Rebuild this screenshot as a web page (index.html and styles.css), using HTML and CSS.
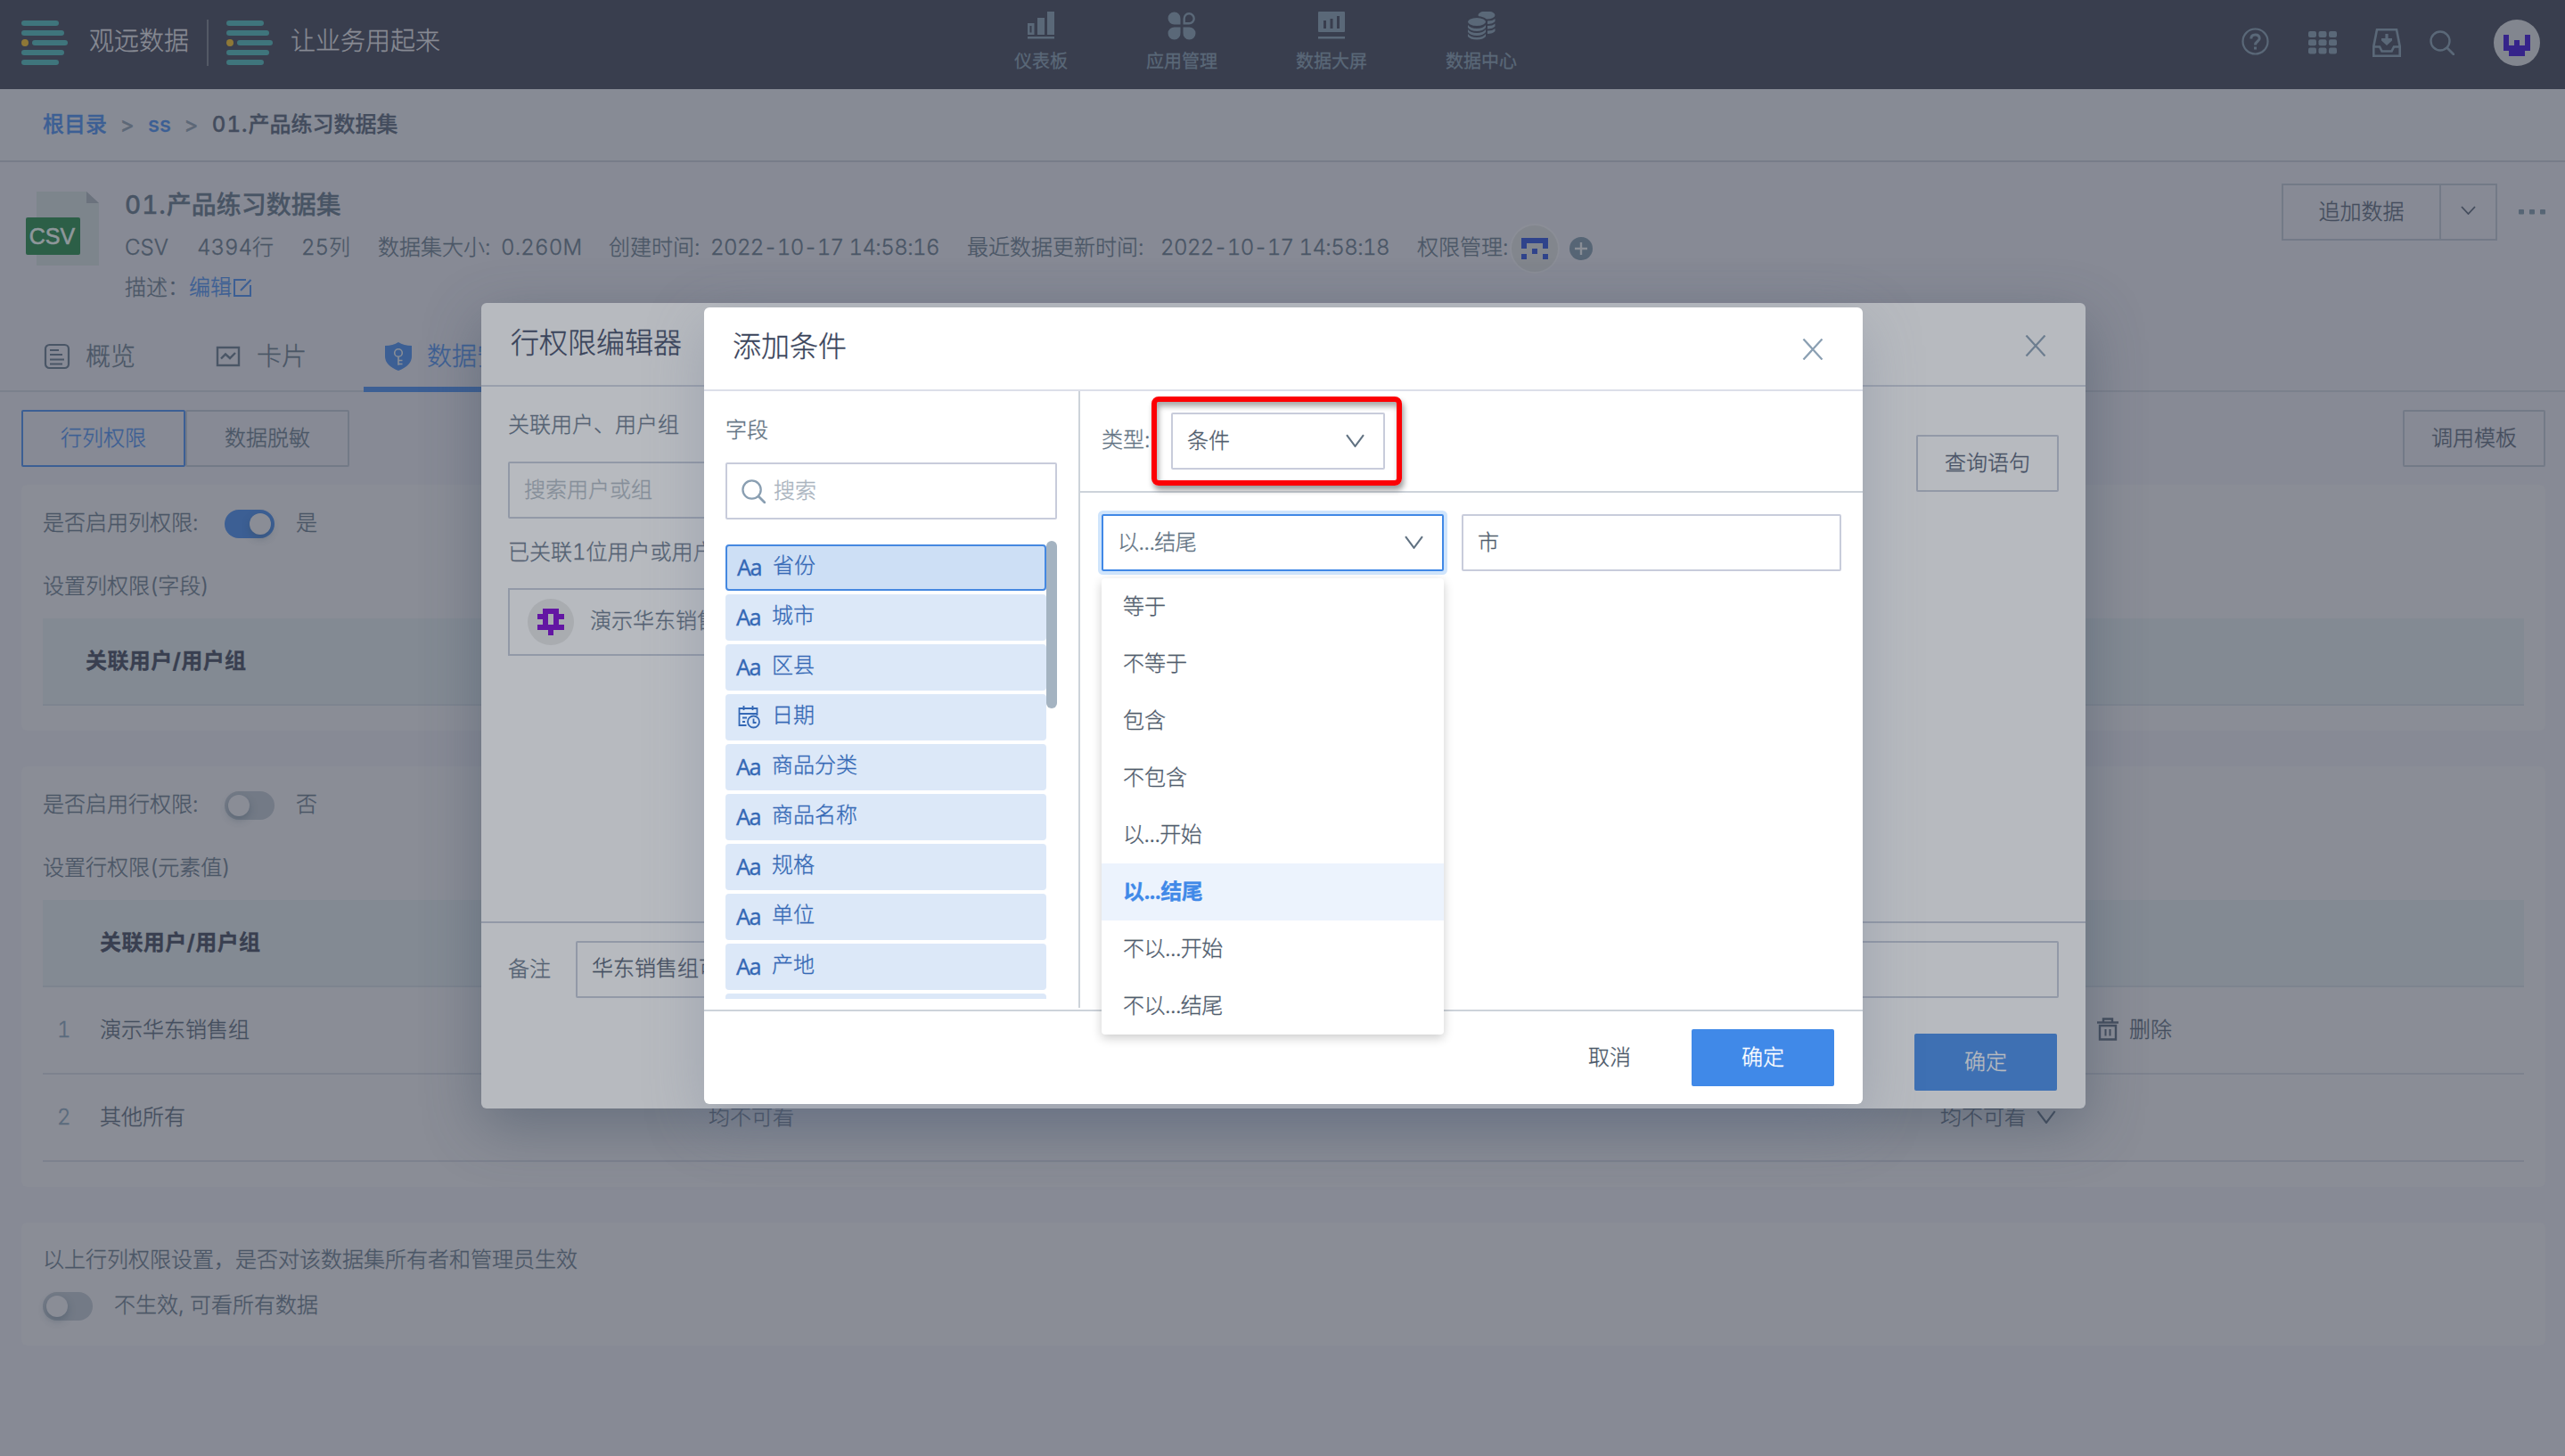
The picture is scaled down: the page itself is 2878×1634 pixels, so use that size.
FILE: index.html
```html
<!DOCTYPE html>
<html lang="zh-CN">
<head>
<meta charset="utf-8">
<title>01.产品练习数据集</title>
<link rel="stylesheet" href="styles.css">
</head>
<body>
<svg class="defs" width="0" height="0" aria-hidden="true">
  <symbol id="logo" viewBox="0 0 52 50">
    <g fill="#3f757c"><rect width="42" height="6" rx="3"/><rect y="11" width="48" height="6" rx="3"/><rect x="12" y="22" width="40" height="6" rx="3"/><rect y="33" width="48" height="6" rx="3"/><rect y="44" width="42" height="6" rx="3"/></g>
    <ellipse cx="4" cy="25" rx="4" ry="4" fill="#8e7837"/>
  </symbol>
  <symbol id="down" viewBox="0 0 20 14"><path d="M1 1l9 12 9-12" fill="none" stroke="currentColor" stroke-width="2"/></symbol>
  <symbol id="close" viewBox="0 0 24 24"><path d="M1.500 .5l21 23M22.500 .5l-21 23" fill="none" stroke="currentColor" stroke-width="2.200"/></symbol>
  <symbol id="search" viewBox="0 0 28 28"><circle cx="12" cy="12" r="10.500" fill="none" stroke="currentColor" stroke-width="2.400"/><path d="M20 20l7 7" stroke="currentColor" stroke-width="2.800" stroke-linecap="round"/></symbol>
</svg>

<header class="topbar">
  <div class="brand">
    <svg class="logo"><use href="#logo"/></svg>
    <span class="brand-name">观远数据</span>
    <i class="brand-sep"></i>
    <svg class="logo"><use href="#logo"/></svg>
    <span class="brand-slogan">让业务用起来</span>
  </div>
  <nav class="mainnav">
    <a><svg width="32" height="32" viewBox="0 0 32 32" fill="currentColor"><path fill-rule="evenodd" d="M1 13h7.500v13H1zM3.500 16v7.500h2V16z"/><path d="M12 7h8v19h-8zM23 0h8v26h-8zM1 28h30v2.500H1z"/></svg>仪表板</a>
    <a><svg width="32" height="32" viewBox="0 0 32 32" fill="currentColor"><path d="M14.500 14.500H8A7 7 0 1 1 14.500 8zM14.500 17.500V24A7 7 0 1 1 8 17.500zM17.500 17.500H24A7 7 0 1 1 17.500 24z"/><path d="M18.700 13.300V8a5.500 5.500 0 1 1 5.500 5.300z" fill="none" stroke="currentColor" stroke-width="2.400"/></svg>应用管理</a>
    <a><svg width="32" height="32" viewBox="0 0 32 32" fill="currentColor"><path fill-rule="evenodd" d="M2 0h28a1 1 0 0 1 1 1v21a1 1 0 0 1-1 1H2a1 1 0 0 1-1-1V1a1 1 0 0 1 1-1zM7 10v9h3v-9zM14.500 8v11h3V8zM22 5v14h3V5z"/><path d="M1 28h30v2.500H1z"/></svg>数据大屏</a>
    <a><svg width="32" height="32" viewBox="0 0 32 32" fill="currentColor"><ellipse cx="22" cy="4" rx="9.500" ry="4.500"/><path d="M23 10.500q6 0 8.500-2.500v3q-2.500 3-8.500 3zM23 16q6 0 8.500-2.500v3q-2.500 3-8.500 3zM23 21.500q6 0 8.500-2.500v3q-2.500 3-8.500 3z"/><ellipse cx="11" cy="11.500" rx="11" ry="5.500" stroke="#393e4e" stroke-width="2"/><path d="M1 15q3 4 10 4t10-4v3q-3 4-10 4T1 18zM1 20q3 4 10 4t10-4v3q-3 4-10 4T1 23zM1 25q3 4 10 4t10-4v3q-3 3.500-10 3.500T1 28z"/></svg>数据中心</a>
  </nav>
  <div class="tools">
    <svg class="tool-help" width="31" height="31" viewBox="0 0 31 31" fill="none" stroke="currentColor" stroke-width="2.200"><circle cx="15.500" cy="15.500" r="14"/><path stroke-width="3" d="M10.800 12.500q0-4.500 4.700-4.500t4.700 4.200c0 3-4.700 3.300-4.700 7.300M15.500 21.500v3"/></svg>
    <svg class="tool-grid" width="32" height="26" viewBox="0 0 32 26" fill="currentColor"><rect width="9" height="7" rx="2"/><rect x="11.500" width="9" height="7" rx="2"/><rect x="23" width="9" height="7" rx="2"/><rect y="9.300" width="9" height="7" rx="2"/><rect x="11.500" y="9.300" width="9" height="7" rx="2"/><rect x="23" y="9.300" width="9" height="7" rx="2"/><rect y="18.500" width="9" height="7" rx="2"/><rect x="11.500" y="18.500" width="9" height="7" rx="2"/><rect x="23" y="18.500" width="9" height="7" rx="2"/></svg>
    <svg class="tool-inbox" width="32" height="32" viewBox="0 0 32 32" fill="none" stroke="currentColor" stroke-width="2.600"><path d="M5 1.300h22l3.700 18.700v10.700H1.300V20zM1.300 20.500H8l2.500 5h11l2.500-5h6.700"/><path d="M16 6v9" stroke-width="3.200"/><path d="M10 11h12v2.500L16 19l-6-5.500z" fill="currentColor" stroke="none"/></svg>
    <svg class="tool-search" width="28" height="28"><use href="#search"/></svg>
    <span class="me"><svg width="30" height="24" viewBox="0 0 5 4" fill="#36248a" shape-rendering="crispEdges"><path d="M0 0h1v2h1V1h1v1h1V0h1v3h-1v1H1V3H0z"/></svg></span>
  </div>
</header>

<div class="crumbs"><a>根目录</a><i>&gt;</i><a>ss</a><i>&gt;</i><b><span class="num">01.</span>产品练习数据集</b></div>

<section class="dataset">
  <svg class="csv" width="84" height="84" viewBox="0 0 84 84"><path d="M13 0h56l14 13v70H13z" fill="#7d858c"/><path d="M69 0l14 13H69z" fill="#6b727d"/><rect x="1" y="29" width="61" height="42" rx="2" fill="#2c5f47"/><text x="30.500" y="58.500" text-anchor="middle" class="csv-text">CSV</text></svg>
  <div class="info">
    <h1><span class="num">01.</span>产品练习数据集</h1>
    <div class="meta">
      <span class="m1">CSV</span><span class="m2">4394行</span><span class="m3">25列</span><span class="m4">数据集大小:</span><span class="m5">0.260M</span><span class="m6">创建时间:</span><span class="m7">2022-10-17 14:58:16</span><span class="m8">最近数据更新时间:</span><span class="m9">2022-10-17 14:58:18</span><span class="m10">权限管理:</span>
      <span class="owner"><svg width="30" height="24" viewBox="0 0 5 4" fill="#2f438b" shape-rendering="crispEdges"><path d="M0 0h5v2H4V1H1v1H0zM2 2h1v1H2zM0 3h1v1H0zM4 3h1v1H4z"/></svg></span>
      <svg class="plus" width="26" height="26" viewBox="0 0 26 26"><circle cx="13" cy="13" r="13" fill="#566575"/><path d="M13 6v14M6 13h14" stroke="#898e96" stroke-width="2.400"/></svg>
    </div>
    <div class="desc"><span>描述：</span><a>编辑<svg width="22" height="20" viewBox="0 0 22 20" fill="none" stroke="currentColor" stroke-width="2"><path d="M15 1H2v18h18V7M9 13L20.500 1"/></svg></a></div>
  </div>
  <div class="actions">
    <div class="split"><span class="split-main">追加数据</span><span class="split-more"><svg width="17" height="10" viewBox="0 0 17 10"><path d="M1 1l7.500 8L16 1" fill="none" stroke="currentColor" stroke-width="1.800"/></svg></span></div>
    <svg width="30" height="6" fill="#566575"><rect width="6" height="5.500" rx="1"/><rect x="12" width="6" height="5.500" rx="1"/><rect x="24" width="6" height="5.500" rx="1"/></svg>
  </div>
</section>

<nav class="tabs">
  <a class="tab"><svg width="30" height="30" viewBox="0 0 30 30" fill="none" stroke="currentColor" stroke-width="2.200"><rect x="2" y="2" width="26" height="26" rx="4.500"/><path d="M7 8h10M7 13h14M7 18.500h16M7 23.500h14"/></svg><span>概览</span></a>
  <a class="tab tab2"><svg width="28" height="24" viewBox="0 0 28 24" fill="none" stroke="currentColor" stroke-width="2.400"><rect x="2" y="2" width="24" height="20"/><path d="M6 14.500l5-5 5 4.500 6-6"/></svg><span>卡片</span></a>
  <a class="tab tab3 on"><svg width="30" height="32" viewBox="0 0 30 32"><path d="M15 0q6 4 15 4v12q0 10-15 16Q0 26 0 16V4q9 0 15-4z" fill="currentColor"/><g fill="none" stroke="#898e96" stroke-width="1.600"><circle cx="15" cy="12" r="4.300"/><path d="M15 16.300v9.500M15 20.500h4.500M15 24.500h4.500"/></g></svg><span>数据安全</span></a>
</nav>

<main class="page">
  <div class="subbar">
    <div class="seg"><span class="seg-on">行列权限</span><span>数据脱敏</span></div>
    <span class="btn">调用模板</span>
  </div>
  <section class="card card1">
    <div class="line"><span class="label">是否启用列权限:</span><i class="switch on"></i><span>是</span></div>
    <p>设置列权限(字段)</p>
    <div class="thead">关联用户/用户组</div>
  </section>
  <section class="card card2">
    <div class="line"><span class="label">是否启用行权限:</span><i class="switch"></i><span>否</span></div>
    <p>设置行权限(元素值)</p>
    <div class="thead thead2">关联用户/用户组</div>
    <div class="row"><span class="no">1</span><span class="who">演示华东销售组</span><span class="cond"></span><span class="op"></span><span class="del"><svg width="24" height="26" viewBox="0 0 24 26" fill="none" stroke="currentColor"><path d="M0 5.500h24" stroke-width="2.400"/><path d="M7 5V1.500h10V5" stroke-width="2.400"/><path d="M3 9h18v15.500H3z" stroke-width="2.400"/><path d="M9.500 13v7.500M14.500 13v7.500" stroke-width="2"/></svg>删除</span></div>
    <div class="row"><span class="no">2</span><span class="who">其他所有</span><span class="cond">均不可看</span><span class="op">均不可看<svg width="22" height="15"><use href="#down"/></svg></span></div>
  </section>
  <section class="card card3">
    <p>以上行列权限设置，是否对该数据集所有者和管理员生效</p>
    <div class="line"><i class="switch"></i><span>不生效, 可看所有数据</span></div>
  </section>
</main>

<section class="editor">
  <div class="editor-head"><h2>行权限编辑器</h2><svg width="24" height="24"><use href="#close"/></svg></div>
  <div class="editor-body">
    <div class="users">
      <div class="users-label">关联用户、用户组</div>
      <div class="users-search">搜索用户或组</div>
      <div class="users-count">已关联1位用户或用户组</div>
      <div class="user"><span class="user-pic"><svg width="30" height="30" viewBox="0 0 5 5" fill="#6316a3" shape-rendering="crispEdges"><path fill-rule="evenodd" d="M1 0h3v1h1v1H4v1h1v1H3v1H2V4H0V3h1V2H0V1h1zM2 1v2h1V1z"/></svg></span><span class="user-name">演示华东销售组</span></div>
    </div>
    <span class="query">查询语句</span>
  </div>
  <div class="editor-note"><span>备注</span><div class="note-input">华东销售组可看</div></div>
  <div class="editor-foot"><span class="ok-dim">确定</span></div>
</section>

<section class="dialog">
  <div class="dialog-head"><h2>添加条件</h2><svg width="24" height="24"><use href="#close"/></svg></div>
  <div class="dialog-body">
    <div class="fields">
      <div class="fields-label">字段</div>
      <div class="fields-search"><svg width="27" height="27"><use href="#search"/></svg>搜索</div>
      <div class="fields-wrap">
        <ul class="fields-list">
          <li class="picked"><b>Aa</b>省份</li>
          <li><b>Aa</b>城市</li>
          <li><b>Aa</b>区县</li>
          <li><svg width="26" height="26" viewBox="0 0 26 26" fill="none" stroke="currentColor" stroke-width="1.800"><path d="M10 22H2V3h20v8M2 9h20M7 0v5M17 0v5M5.500 13.500h5M5.500 18h3"/><circle cx="18" cy="18" r="6.500"/><path d="M18 14.500V19h3"/></svg>日期</li>
          <li><b>Aa</b>商品分类</li>
          <li><b>Aa</b>商品名称</li>
          <li><b>Aa</b>规格</li>
          <li><b>Aa</b>单位</li>
          <li><b>Aa</b>产地</li>
          <li></li>
        </ul>
        <i class="thumb"></i>
      </div>
    </div>
    <div class="rule">
      <div class="rule-type"><span>类型:</span><div class="select type-select">条件<svg width="21" height="15"><use href="#down"/></svg><i class="highlight"></i></div></div>
      <div class="rule-row">
        <div class="select op-select"><span class="dots">以...结尾</span><svg width="21" height="15"><use href="#down"/></svg>
          <ul class="menu">
            <li>等于</li><li>不等于</li><li>包含</li><li>不包含</li><li class="dots">以...开始</li><li class="dots cur">以...结尾</li><li class="dots">不以...开始</li><li class="dots">不以...结尾</li>
          </ul>
        </div>
        <div class="value">市</div>
      </div>
    </div>
  </div>
  <div class="dialog-foot"><span class="cancel">取消</span><span class="ok">确定</span></div>
</section>
</body>
</html>
```
FILE: styles.css
```css
* { box-sizing: border-box; margin: 0; padding: 0; }
html, body { width: 2878px; height: 1634px; overflow: hidden; }
body {
  background: #878a95;
  color: #4a5666;
  font: 300 24px/36px Inter, "Noto Sans CJK SC", sans-serif;
  font-variant-numeric: tabular-nums;
  -webkit-text-stroke: .3px currentColor;
}
.defs { position: absolute; }
svg { display: block; flex: none; }
i, b { font-style: normal; }
ul { list-style: none; }
span { white-space: nowrap; }
.num { letter-spacing: 1px; }
.dots { letter-spacing: -.5px; }

/* top bar */
.topbar { display: grid; grid-template-columns: 1138px auto 1fr; height: 100px; background: #393e4e; color: #5a6878; }
.brand { display: flex; align-items: center; padding: 0 0 4px 24px; color: #888b94; font-size: 28px; }
.logo { width: 52px; height: 50px; }
.brand-name, .brand-slogan { padding-bottom: 4px; }
.brand-name { margin-left: 24px; width: 132px; }
.brand-sep { width: 2px; height: 52px; background: #535965; margin-right: 20px; }
.brand-slogan { margin-left: 20px; }
.mainnav { display: flex; gap: 88px; padding-top: 13px; font-size: 20px; line-height: 28px; font-weight: 400; }
.mainnav a { display: flex; flex-direction: column; align-items: center; gap: 10px; }
.tools { display: flex; align-items: center; justify-content: flex-end; padding: 0 28px 4px 0; }
.tool-help { margin: 0 44px 4px 0; }
.tool-grid { margin-right: 40px; }
.tool-inbox { margin-right: 32px; }
.tool-search { margin-right: 44px; }
.me { width: 52px; height: 52px; border-radius: 50%; background: #82868f; display: flex; align-items: center; justify-content: center; padding-top: 6px; }

/* breadcrumb */
.crumbs { height: 82px; border-bottom: 2px solid #777c89; background: #878b95; display: flex; align-items: center; padding: 0 0 1px 48px; font-weight: 500; }
.crumbs a { color: #3c5f94; }
.crumbs i { width: 46px; text-align: center; color: #5d6877; }
.crumbs b { font-weight: 500; color: #434c5d; }

/* dataset summary */
.dataset { display: flex; height: 182px; padding: 0 22px 0 28px; }
.csv { margin-top: 33px; }
.csv-text { font: 500 25px "Liberation Sans", Arial, sans-serif; fill: #8f979b; stroke: #8f979b; stroke-width: .6px; }
.info { margin-left: 28px; flex: 1; }
.info h1 { margin-top: 29px; font-size: 28px; font-weight: 500; line-height: 38px; color: #485464; }
.meta { display: flex; align-items: center; height: 56px; margin-top: 1px; }
.m1 { width: 81px; } .m2 { width: 117px; } .m3 { width: 86px; } .m4 { width: 138px; } .m5 { width: 121px; letter-spacing: .2px; }
.m6 { width: 114px; } .m7 { width: 288px; } .m8 { width: 217px; } .m9 { width: 288px; } .m10 { width: 106px; }
.m7, .m9 { letter-spacing: -.57px; }
.owner { width: 52px; height: 52px; border-radius: 50%; background: #82868d; box-shadow: 0 0 0 2px #8b8e97; display: flex; align-items: center; justify-content: center; margin-top: 2px; }
.plus { margin: 2px 0 0 13px; }
.desc { display: flex; margin-top: -1px; }
.desc span { width: 72px; }
.desc a { display: flex; align-items: center; color: #3c5f94; gap: 1px; }
.actions { display: flex; align-items: center; height: 64px; margin-top: 24px; gap: 24px; }
.split { display: flex; width: 242px; height: 64px; border: 2px solid #737a87; color: #444d5d; }
.split-main { flex: 1; display: flex; align-items: center; justify-content: center; padding-bottom: 1px; }
.split-more { width: 63px; border-left: 2px solid #737a87; display: flex; align-items: center; justify-content: center; padding-bottom: 4px; }

/* tabs */
.tabs { display: flex; height: 76px; padding-left: 25px; border-bottom: 2px solid #7b808c; font-size: 28px; }
.tab { display: flex; align-items: center; height: 76px; padding: 0 24px 5px; gap: 17px; }
.tab2 { margin-left: 42px; gap: 18px; padding-right: 22px; }
.tab3 { margin-left: 42px; padding: 6px 24px 5px; width: 200px; }
.tab.on { color: #3c5f94; border-bottom: 6px solid #3c5f94; }

/* permissions page */
.page { padding: 20px 22px 0 24px; }
.subbar { display: flex; justify-content: space-between; height: 64px; }
.seg { display: flex; }
.seg span, .btn { display: flex; align-items: center; justify-content: center; height: 64px; border: 2px solid #737a87; border-radius: 2px; padding-bottom: 1px; }
.seg span { width: 184px; }
.seg .seg-on { border-color: #3c5f94; color: #3c5f94; }
.btn { width: 160px; color: #444d5d; }
.card { background: #8a8d96; border-radius: 6px; padding: 25px 24px 24px; }
.card1 { height: 276px; margin-top: 20px; }
.card2 { height: 472px; margin-top: 40px; }
.card3 { height: 138px; margin-top: 40px; }
.line { display: flex; align-items: center; height: 36px; gap: 24px; }
.label { width: 180px; }
.switch { width: 56px; height: 32px; border-radius: 16px; background: #737a86; margin-top: 2px; padding: 4px; }
.switch::before { content: ""; display: block; width: 24px; height: 24px; border-radius: 50%; background: #8a8d96; box-shadow: 0 4px 8px rgba(50, 70, 85, .35); }
.switch.on { background: #3c5f94; }
.switch.on::before { margin-left: 24px; }
.card p { margin-top: 35px; line-height: 36px; }
.thead { height: 98px; margin-top: 18px; padding: 0 48px 1px; display: flex; align-items: center; background: #838a93; border-bottom: 2px solid #7d848f; font-weight: 700; letter-spacing: .4px; color: #393f50; }
.thead2 { padding-left: 64px; }
.row { display: grid; grid-template-columns: 64px 683px 1382px 176px 1fr; align-items: center; height: 98px; padding-bottom: 1px; border-bottom: 2px solid #7d828e; color: #444e5e; }
.no { padding-left: 16px; color: #5a6b7d; }
.op, .del { display: flex; align-items: center; gap: 12px; }
.del svg { margin-top: -2px; }
.card3 p { margin-top: -1px; }
.card3 .line { margin-top: 15px; }

/* row permission editor */
.editor { position: absolute; left: 540px; top: 340px; width: 1800px; height: 904px; background: #b7babf; border-radius: 6px; box-shadow: 0 20px 64px rgba(60, 75, 95, .45); overflow: hidden; color: #536172; }
.editor-head { display: flex; align-items: center; justify-content: space-between; height: 94px; padding: 0 44px 3px 33px; border-bottom: 2px solid #999fac; color: #6c7d8f; }
.editor-head svg { margin-top: 6px; }
.dialog-head svg { margin-top: 5px; }
h2 { font-size: 32px; font-weight: 300; color: #39435a; }
.editor-body { display: flex; justify-content: space-between; height: 602px; padding: 0 30px; border-bottom: 2px solid #9299a7; }
.users { width: 520px; }
.users-label { margin-top: 25px; }
.users-search { height: 64px; margin-top: 23px; padding: 0 16px 2px; border: 2px solid #9299a7; border-radius: 2px; line-height: 59px; color: #858e99; }
.users-count { margin-top: 20px; }
.user { display: flex; align-items: center; gap: 18px; height: 76px; margin-top: 22px; padding-left: 20px; border: 2px solid #9299a7; }
.user-pic { width: 52px; height: 52px; border-radius: 50%; background: #a9acb0; display: flex; align-items: center; justify-content: center; }
.user-name { padding-bottom: 3px; }
.query { width: 160px; height: 64px; margin-top: 54px; border: 2px solid #9299a7; border-radius: 2px; display: flex; align-items: center; justify-content: center; padding-bottom: 1px; color: #465064; }
.editor-note { display: flex; align-items: center; padding: 20px 30px 0; gap: 28px; }
.note-input { flex: 1; height: 64px; border: 2px solid #9299a7; border-radius: 2px; padding: 0 16px; line-height: 58px; color: #444f62; }
.editor-foot { display: flex; justify-content: flex-end; padding: 40px 32px 0; }
.ok-dim, .ok { width: 160px; height: 64px; border-radius: 2px; display: flex; align-items: center; justify-content: center; padding-bottom: 1px; }
.ok-dim { background: #3e70b3; color: #b7babf; }

/* add-condition dialog */
.dialog { position: absolute; left: 790px; top: 345px; width: 1300px; height: 894px; background: #fff; border-radius: 6px; box-shadow: 0 20px 64px rgba(110, 120, 145, .35); color: #617282; }
.dialog-head { display: flex; align-items: center; justify-content: space-between; height: 94px; padding: 0 44px 4px 32px; border-bottom: 2px solid #dcdfe9; color: #8a9fb2; }
.dialog-body { display: flex; height: 696px; border-bottom: 2px solid #cdd3da; }
.fields { width: 422px; height: 692px; padding: 0 24px; border-right: 2px solid #cdd3da; }
.fields-label { margin-top: 26px; }
.fields-search { display: flex; align-items: center; height: 64px; margin-top: 18px; padding: 0 16px 1px; gap: 9px; border: 2px solid #c8ccdb; border-radius: 2px; color: #a9b3be; }
.fields-search svg { color: #8a9fb2; margin-top: 2px; }
.fields-wrap { display: flex; width: 372px; height: 514px; margin-top: 24px; overflow: hidden; }
.fields-list { width: 360px; padding-top: 4px; }
.fields-list li { display: flex; align-items: center; height: 52px; margin-bottom: 4px; padding: 0 12px 4px; border-radius: 4px; background: #dce8f8; color: #3468b5; }
.fields-list b { width: 40px; font: 400 25px/36px "Noto Sans", sans-serif; letter-spacing: -1.5px; padding-top: 2px; }
.fields-list svg { margin: 4px 12px 0 1px; width: 27px; }
.fields-list .picked { background: #cddff5; border: 2px solid #4588e0; padding-left: 11px; }
.thumb { width: 12px; height: 188px; border-radius: 6px; background: #a4b3c1; }
.rule { flex: 1; }
.rule-type { display: flex; align-items: flex-start; height: 114px; padding: 24px 0 0 24px; border-bottom: 2px solid #cdd3da; }
.rule-type > span { width: 78px; line-height: 61px; }
.select, .value { position: relative; height: 64px; border: 2px solid #c8ccdb; border-radius: 2px; padding: 0 16px 1px; display: flex; align-items: center; color: #4f5c6d; }
.select { justify-content: space-between; padding-right: 21px; }
.select > svg { color: #617282; }
.type-select { width: 240px; }
.highlight { position: absolute; left: -24px; top: -20px; width: 281px; height: 100px; border: 6px solid #fc0004; border-radius: 8px; box-shadow: 2px 5px 6px rgba(0, 0, 0, .4), inset 2px 5px 6px rgba(0, 0, 0, .35); }
.rule-row { display: flex; gap: 20px; padding: 24px 24px 0; }
.op-select { width: 384px; border-color: #4088e6; box-shadow: 0 0 0 4px #d0e5fc; color: #617282; }
.value { flex: 1; }
.menu { position: absolute; left: -2px; top: 70px; width: 384px; background: #fff; border-radius: 4px; box-shadow: 0 4px 12px rgba(0, 0, 0, .2); color: #4f5c6d; }
.menu li { height: 64px; padding: 0 24px; line-height: 63px; }
.menu .cur { background: #ecf3fd; color: #4089e8; font-weight: 700; letter-spacing: -.3px; }
.dialog-foot { display: flex; align-items: center; justify-content: flex-end; padding: 20px 32px 0; gap: 68px; }
.cancel { color: #4a5768; padding-bottom: 1px; }
.ok { background: #4089e8; color: #fff; }
```
